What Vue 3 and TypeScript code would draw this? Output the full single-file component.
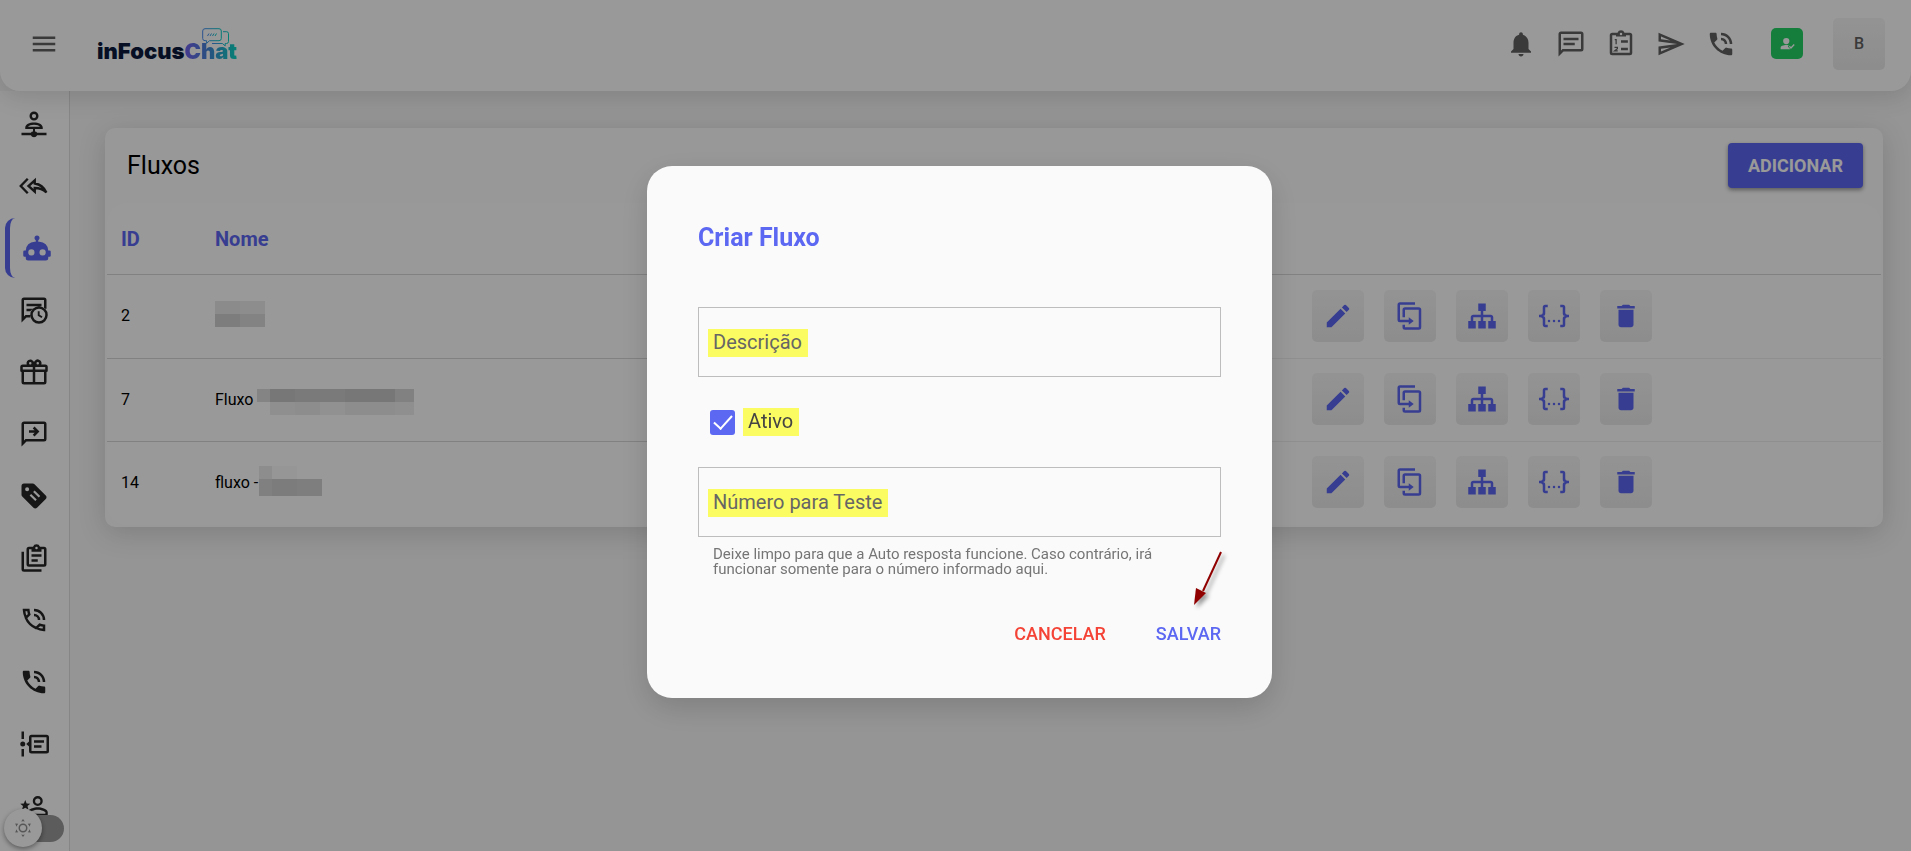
<script setup lang="ts">
import { ref } from 'vue'

interface Icon {
  fill?: string
  line?: string
}

interface Block {
  x: number
  y: number
  w: number
  h: number
  c: string
}

interface Flow {
  id: number
  name: string
  width: number
  height: number
  blocks: Block[]
}

const phone =
  'M20 15.5c-1.25 0-2.45-.2-3.57-.57a1.02 1.02 0 0 0-1.02.24l-2.2 2.2a15.045 15.045 0 0 1-6.59-6.59l2.2-2.21a.96.96 0 0 0 .25-1A11.36 11.36 0 0 1 8.5 4c0-.55-.45-1-1-1H4c-.55 0-1 .45-1 1 0 9.39 7.61 17 17 17 .55 0 1-.45 1-1v-3.5c0-.55-.45-1-1-1zM19 12h2a9 9 0 0 0-9-9v2c3.87 0 7 3.13 7 7zm-4 0h2c0-2.76-2.24-5-5-5v2c1.66 0 3 1.34 3 3z'
const bubble =
  'M20 2a2 2 0 0 1 2 2v12a2 2 0 0 1-2 2H6l-4 4V4c0-1.11.9-2 2-2h16M4 4v13.17L5.17 16H20V4H4'

const topIcons: { label: string; icon: Icon }[] = [
  {
    label: 'Notificações',
    icon: {
      fill: 'M12 22c1.1 0 2-.9 2-2h-4c0 1.1.89 2 2 2zm6-6v-5c0-3.07-1.64-5.64-4.5-6.32V4c0-.83-.67-1.5-1.5-1.5s-1.5.67-1.5 1.5v.68C7.63 5.36 6 7.92 6 11v5l-2 2v1h16v-1l-2-2z',
    },
  },
  { label: 'Mensagens', icon: { fill: bubble + 'M6 7h12v2H6V7m0 4h9v2H6v-2' } },
  {
    label: 'Tarefas',
    icon: {
      fill: 'M19 3h-4.2a3 3 0 0 0-5.6 0H5a2 2 0 0 0-2 2v14a2 2 0 0 0 2 2h14a2 2 0 0 0 2-2V5a2 2 0 0 0-2-2M12 3a1 1 0 1 1 0 2 1 1 0 0 1 0-2M5 5h3v1h8V5h3v14H5V5M12 9h5.500v2H12V9m0 6h5.500v2H12v-2z',
      line: 'M7 8.400h1.100v3.800M6.800 14.600h2.300v1.200l-2.200 1.700h2.500|1',
    },
  },
  {
    label: 'Enviar',
    icon: {
      fill: 'M4.010 6.030l7.510 3.220-7.520-1 .01-2.220m7.500 8.720L4 17.970v-2.220l7.510-1M2.010 3L2 10l15 2-15 2 .01 7L23 12 2.010 3z',
    },
  },
  { label: 'Chamadas', icon: { fill: phone } },
]

const sideIcons: { label: string; icon: Icon; active?: boolean }[] = [
  {
    label: 'Atendimentos',
    icon: {
      fill: 'M12 2a3.600 3.600 0 1 0 0 7.200A3.600 3.600 0 0 0 12 2m0 1.900a1.700 1.700 0 1 1 0 3.400 1.700 1.700 0 0 1 0-3.400M12 10.700c-3.600 0-7 1.500-7 4V16h14v-1.300c0-2.500-3.400-4-7-4m0 1.900c2.200 0 4.100.6 4.800 1.600H7.200c.7-1 2.600-1.600 4.800-1.600M11.200 16h1.600v2a2 2 0 0 1 1.700 1H22v1.900h-7.500a2.700 2.700 0 0 1-5 0H2V19h7.500a2 2 0 0 1 1.700-1z',
    },
  },
  {
    label: 'Respostas rápidas',
    icon: { line: 'M7 6.200 1.400 12 7 17.800M12.600 7.500 7.600 12l5 4.500v-2.900c4 0 6.500.8 9.300 3.600-2-4.300-4.600-6.500-9.300-7.200z|1.9' },
  },
  {
    label: 'Fluxos',
    active: true,
    icon: {
      fill: 'M12 2a2 2 0 0 1 2 2c0 .74-.4 1.390-1 1.730V7h1a7 7 0 0 1 7 7h1a1 1 0 0 1 1 1v3a1 1 0 0 1-1 1h-1v1a2 2 0 0 1-2 2H5a2 2 0 0 1-2-2v-1H2a1 1 0 0 1-1-1v-3a1 1 0 0 1 1-1h1a7 7 0 0 1 7-7h1V5.730c-.6-.34-1-.99-1-1.730a2 2 0 0 1 2-2M7.500 13a2.500 2.500 0 1 0 0 5 2.500 2.500 0 0 0 0-5m9 0a2.500 2.500 0 1 0 0 5 2.500 2.500 0 0 0 0-5z',
    },
  },
  {
    label: 'Agendamentos',
    icon: {
      fill: 'M2 22V4a2 2 0 0 1 2-2h16a2 2 0 0 1 2 2v7h-2V4H4v13.200L5.200 16H9v2H6zM6 7h12v2H6zM6 11h5l-2 2H6zM16 9a7 7 0 1 0 0 14 7 7 0 0 0 0-14m0 2a5 5 0 1 1 0 10 5 5 0 0 1 0-10M15 13v3.600l3 1.800.8-1.300-2.300-1.400V13z',
    },
  },
  {
    label: 'Promoções',
    icon: {
      fill: 'M22 12v8a2 2 0 0 1-2 2H4a2 2 0 0 1-2-2v-8a1 1 0 0 1-1-1V8a2 2 0 0 1 2-2h3.170A3 3 0 0 1 9 2c1 0 1.880.5 2.430 1.240L12 4l.57-.76A3 3 0 0 1 17.830 6H21a2 2 0 0 1 2 2v3a1 1 0 0 1-1 1M4 20h7v-8H4v8m16 0v-8h-7v8h7M9 4a1 1 0 1 0 0 2 1 1 0 0 0 0-2m6 0a1 1 0 1 0 0 2 1 1 0 0 0 0-2M3 8v2h8V8H3m10 0v2h8V8h-8z',
    },
  },
  {
    label: 'Encaminhar',
    icon: { fill: bubble + 'M8 9h4.500L11 7.500l1.420-1.420L16.340 10l-3.920 3.920L11 12.500l1.500-1.500H8V9z' },
  },
  {
    label: 'Etiquetas',
    icon: {
      fill: 'M21.400 11.600l-9-9A2 2 0 0 0 11 2H4a2 2 0 0 0-2 2v7c0 .5.2 1 .6 1.400l9 9c.8.8 2 .8 2.800 0l7-7c.8-.8.8-2 0-2.800M6.500 5a1.600 1.600 0 1 1 0 3.200 1.600 1.600 0 0 1 0-3.200M8.500 11.500l1.200-1.200 4.500 4.500-1.200 1.200zM11.300 8.700l1.200-1.200 4.500 4.500-1.200 1.200z',
    },
  },
  {
    label: 'Relatórios',
    icon: {
      fill: 'M20 3h-3.200a3 3 0 0 0-5.600 0H8a2 2 0 0 0-2 2v12a2 2 0 0 0 2 2h12a2 2 0 0 0 2-2V5a2 2 0 0 0-2-2m-6 0a1 1 0 1 1 0 2 1 1 0 0 1 0-2M8 5h2v2h8V5h2v12H8V5M10 9h8v2h-8V9m0 4h5v2h-5v-2M2 7h2v14h14v2H4a2 2 0 0 1-2-2z',
    },
  },
  {
    label: 'Ligações',
    icon: {
      line: 'M4 4h3.500c.1 1.200.3 2.400.7 3.500L5.600 10.100C4.600 8.200 4.100 6 4 4zM5.300 9.900A16 16 0 0 0 14 18.600M20 20v-3.500c-1.200-.1-2.400-.3-3.500-.7l-2.600 2.600c1.900 1 4 1.500 6.100 1.600zM12 4a8 8 0 0 1 8 8M12 8a4 4 0 0 1 4 4|2',
    },
  },
  { label: 'Chamadas', icon: { fill: phone } },
  {
    label: 'Linha do tempo',
    icon: {
      fill: 'M2 2h2v6H2zM2 16h2v6H2zM3 10a2 2 0 1 1 0 4 2 2 0 0 1 0-4M22 4.500H10a2 2 0 0 0-2 2V10l-2.200 2L8 14v3.500a2 2 0 0 0 2 2h12a2 2 0 0 0 2-2v-11a2 2 0 0 0-2-2m0 13H10v-11h12zM12 9h8v2h-8zM12 13h6v2h-6z',
    },
  },
  {
    label: 'Usuários',
    icon: {
      fill: 'M15 4a4 4 0 1 0 0 8 4 4 0 0 0 0-8m0 1.900a2.100 2.100 0 1 1 0 4.200 2.100 2.100 0 0 1 0-4.200M15 13c-2.700 0-8 1.300-8 4v3h16v-3c0-2.700-5.300-4-8-4m0 1.900c3 0 6.100 1.500 6.100 2.100v1.100H8.900V17c0-.6 3.100-2.100 6.100-2.100M5 13.300l-2.500 1.500.7-2.800L1 10.100l2.900-.2L5 7.200l1.100 2.700 2.900.2L6.800 12l.7 2.800z',
    },
  },
]

const actions: { label: string; icon: Icon }[] = [
  {
    label: 'Editar',
    icon: {
      fill: 'M3 17.250V21h3.750L17.810 9.940l-3.750-3.750L3 17.250zM20.710 7.040a1 1 0 0 0 0-1.410l-2.340-2.340a1 1 0 0 0-1.410 0l-1.830 1.830 3.750 3.750 1.830-1.830z',
    },
  },
  {
    label: 'Duplicar',
    icon: {
      fill: 'M11 17H4a2 2 0 0 1-2-2V3a2 2 0 0 1 2-2h12v2H4v12h7v-2l4 3-4 3v-2m8 4V7H8v6H6V7a2 2 0 0 1 2-2h11a2 2 0 0 1 2 2v14a2 2 0 0 1-2 2H8a2 2 0 0 1-2-2v-2h2v2h11z',
    },
  },
  {
    label: 'Abrir fluxo',
    icon: {
      fill: 'M9 2v6h2v3H5c-1.110 0-2 .89-2 2v3H1v6h6v-6H5v-3h6v3H9v6h6v-6h-2v-3h6v3h-2v6h6v-6h-2v-3c0-1.110-.89-2-2-2h-6V8h2V2H9z',
    },
  },
  {
    label: 'Exportar',
    icon: {
      fill: 'M5 3h2v2H5v5a2 2 0 0 1-2 2 2 2 0 0 1 2 2v5h2v2H5c-1.070-.27-2-.9-2-2v-4a2 2 0 0 0-2-2H0v-2h1a2 2 0 0 0 2-2V5a2 2 0 0 1 2-2m14 0a2 2 0 0 1 2 2v4a2 2 0 0 0 2 2h1v2h-1a2 2 0 0 0-2 2v4a2 2 0 0 1-2 2h-2v-2h2v-5a2 2 0 0 1 2-2 2 2 0 0 1-2-2V5h-2V3h2m-7 12a1 1 0 1 1 0 2 1 1 0 0 1 0-2m-4 0a1 1 0 1 1 0 2 1 1 0 0 1 0-2m8 0a1 1 0 1 1 0 2 1 1 0 0 1 0-2z',
    },
  },
  {
    label: 'Excluir',
    icon: { fill: 'M6 19c0 1.100.9 2 2 2h8c1.100 0 2-.9 2-2V7H6v12zM19 4h-3.500l-1-1h-5l-1 1H5v2h14V4z' },
  },
]

const flows: Flow[] = [
  {
    id: 2,
    name: '',
    width: 50,
    height: 30,
    blocks: [
      { x: 0, y: 0, w: 25, h: 13, c: '#e8e8e8' },
      { x: 25, y: 0, w: 25, h: 13, c: '#ececec' },
      { x: 0, y: 13, w: 25, h: 13, c: '#d0d0d0' },
      { x: 25, y: 13, w: 25, h: 13, c: '#dadada' },
    ],
  },
  {
    id: 7,
    name: 'Fluxo',
    width: 157,
    height: 32,
    blocks: [
      { x: 0, y: 6, w: 13, h: 13, c: '#dcdcdc' },
      { x: 13, y: 6, w: 25, h: 13, c: '#c6c6c6' },
      { x: 38, y: 6, w: 50, h: 13, c: '#cccccc' },
      { x: 88, y: 6, w: 50, h: 13, c: '#c6c6c6' },
      { x: 138, y: 6, w: 19, h: 13, c: '#d8d8d8' },
      { x: 13, y: 19, w: 25, h: 13, c: '#efefef' },
      { x: 38, y: 19, w: 25, h: 13, c: '#ececec' },
      { x: 63, y: 19, w: 25, h: 13, c: '#f2f2f2' },
      { x: 88, y: 19, w: 50, h: 13, c: '#ebebeb' },
      { x: 138, y: 19, w: 19, h: 13, c: '#efefef' },
    ],
  },
  {
    id: 14,
    name: 'fluxo -',
    width: 63,
    height: 32,
    blocks: [
      { x: 0, y: 0, w: 13, h: 13, c: '#ebebeb' },
      { x: 13, y: 0, w: 25, h: 13, c: '#fafafa' },
      { x: 0, y: 13, w: 13, h: 17, c: '#d5d5d5' },
      { x: 13, y: 13, w: 25, h: 17, c: '#cfcfcf' },
      { x: 38, y: 13, w: 25, h: 17, c: '#d2d2d2' },
    ],
  },
]

const description = ref('')
const active = ref(true)
const testNumber = ref('')
const dark = ref(false)

const linePath = (icon: Icon) => (icon.line ?? '').split('|')[0]
const lineWidth = (icon: Icon) => (icon.line ?? '').split('|')[1]
</script>

<template>
  <div class="app">
    <header class="topbar">
      <button class="icon-btn" type="button" aria-label="Menu">
        <svg class="icon" viewBox="0 0 24 24"><path d="M3 18h18v-2H3v2zm0-5h18v-2H3v2zm0-7v2h18V6H3z" /></svg>
      </button>
      <a class="logo" href="#">
        <span>inFocus</span><span class="logo-chat">Chat</span>
        <svg class="logo-bubbles" viewBox="0 0 28 20" fill="none">
          <defs>
            <linearGradient id="bubble-ink" x1="0" x2="1">
              <stop offset="0" stop-color="#4b8bf0" />
              <stop offset="1" stop-color="#08d0c4" />
            </linearGradient>
          </defs>
          <path
            d="M3 .7h14a2.300 2.300 0 0 1 2.300 2.300v7.400a2.300 2.300 0 0 1-2.300 2.300H7.500L4.600 15.400v-2.700H3A2.300 2.300 0 0 1 .7 10.400V3A2.300 2.300 0 0 1 3 .7z"
            stroke="url(#bubble-ink)"
          />
          <path
            d="M21 3.700h3.500A2 2 0 0 1 26.500 5.700v7.800a2 2 0 0 1-2 2h-1.300v2.400l-2.800-2.400H10"
            stroke="url(#bubble-ink)"
          />
          <path d="M5.500 8l1.500-2.500M8 8l1.500-2.500M10.500 8L12 5.500M13 8l1.500-2.500" stroke="url(#bubble-ink)" />
        </svg>
      </a>
      <nav class="tools" aria-label="Atalhos">
        <button v-for="t in topIcons" :key="t.label" class="icon-btn" type="button" :aria-label="t.label">
          <svg class="icon" viewBox="0 0 24 24">
            <path :d="t.icon.fill" fill-rule="evenodd" />
            <path v-if="t.icon.line" :d="linePath(t.icon)" :stroke-width="lineWidth(t.icon)" class="stroke" />
          </svg>
        </button>
      </nav>
      <button class="presence" type="button" aria-label="Disponível">
        <svg viewBox="0 0 24 24">
          <path
            d="M10 3a5 5 0 1 1 0 10 5 5 0 0 1 0-10M10 14.500c1.500 0 2.900.2 4.100.6l-1.600 1.600 4 4.300H1v-2.300c0-2.600 4.500-4.200 9-4.200M23.500 14.400l-6 6.300-3.300-3.500 1.600-1.600 1.700 1.800 4.400-4.600z"
          />
        </svg>
      </button>
      <button class="avatar soft" type="button">B</button>
    </header>

    <div class="body">
      <aside class="sidebar">
        <a
          v-for="s in sideIcons"
          :key="s.label"
          class="side-link"
          :class="{ active: s.active }"
          href="#"
          :aria-label="s.label"
        >
          <svg class="icon" viewBox="0 0 24 24">
            <path v-if="s.icon.fill" :d="s.icon.fill" fill-rule="evenodd" />
            <path v-if="s.icon.line" :d="linePath(s.icon)" :stroke-width="lineWidth(s.icon)" class="stroke" />
          </svg>
        </a>
      </aside>

      <main class="content">
        <section class="card">
          <div class="card-head">
            <h1>Fluxos</h1>
            <button class="add" type="button">ADICIONAR</button>
          </div>
          <div class="table-wrap">
            <table>
              <thead>
                <tr>
                  <th class="col-id" scope="col">ID</th>
                  <th scope="col">Nome</th>
                  <th class="col-actions" scope="col" aria-label="Ações"></th>
                </tr>
              </thead>
              <tbody>
                <tr v-for="f in flows" :key="f.id">
                  <td>{{ f.id }}</td>
                  <td>
                    <div class="name" :class="{ tight: f.name.endsWith('-') }">
                      <span v-if="f.name">{{ f.name }}</span>
                      <svg :width="f.width" :height="f.height" shape-rendering="crispEdges">
                        <rect
                          v-for="(b, i) in f.blocks"
                          :key="i"
                          :x="b.x"
                          :y="b.y"
                          :width="b.w"
                          :height="b.h"
                          :fill="b.c"
                        />
                      </svg>
                    </div>
                  </td>
                  <td class="cell-actions">
                    <div class="actions">
                      <button
                        v-for="a in actions"
                        :key="a.label"
                        class="action soft"
                        type="button"
                        :aria-label="a.label"
                      >
                        <svg class="icon" viewBox="0 0 24 24"><path :d="a.icon.fill" /></svg>
                      </button>
                    </div>
                  </td>
                </tr>
              </tbody>
            </table>
          </div>
        </section>
      </main>
    </div>

    <label class="theme">
      <input v-model="dark" type="checkbox" role="switch" aria-label="Modo escuro" />
      <span class="knob">
        <svg viewBox="0 0 24 24">
          <circle cx="12" cy="12" r="5" fill="none" stroke="currentColor" stroke-width="2" />
          <path
            d="M12 0l2.400 3.400a9 9 0 0 0-4.800 0zM12 24l2.400-3.400a9 9 0 0 1-4.800 0zM1.600 6l4.100.3a9 9 0 0 0-2.400 4.100zM22.400 6l-4.100.3a9 9 0 0 1 2.400 4.100zM1.600 18l4.100-.3a9 9 0 0 1-2.400-4.100zM22.400 18l-4.100-.3a9 9 0 0 0 2.400-4.100z"
            fill="currentColor"
          />
        </svg>
      </span>
    </label>

    <div class="backdrop">
      <form class="dialog" role="dialog" aria-modal="true" aria-labelledby="dialog-title" @submit.prevent>
        <h2 id="dialog-title">Criar Fluxo</h2>
        <div class="field">
          <input id="description" v-model="description" type="text" />
          <label for="description" class="mark">Descrição</label>
        </div>
        <div class="check">
          <input id="active" v-model="active" type="checkbox" />
          <label for="active" class="mark">Ativo</label>
        </div>
        <div class="field">
          <input id="test-number" v-model="testNumber" type="text" aria-describedby="test-hint" />
          <label for="test-number" class="mark">Número para Teste</label>
        </div>
        <p id="test-hint" class="hint">
          Deixe limpo para que a Auto resposta funcione. Caso contrário, irá funcionar somente para o número
          informado aqui.
        </p>
        <div class="dialog-actions">
          <button class="cancel" type="button">CANCELAR</button>
          <button class="save" type="submit">SALVAR</button>
        </div>
        <svg class="pointer" viewBox="0 0 36 60">
          <path d="M31 2L13 41" stroke="#900000" stroke-width="2" />
          <path d="M4 55l2-17 10 5z" fill="#900000" />
        </svg>
      </form>
    </div>
  </div>
</template>

<style>
body {
  margin: 0;
}
</style>

<style scoped>
* {
  box-sizing: border-box;
}
.app {
  --primary: #5c67f2;
  height: 100vh;
  display: flex;
  flex-direction: column;
  position: relative;
  overflow: hidden;
  background: #f8f8f8;
  color: #000;
  font-family: Roboto, 'Liberation Sans', sans-serif;
  font-size: 16px;
}
button {
  font-family: inherit;
  border: 0;
  padding: 0;
  background: none;
  cursor: pointer;
}
.icon {
  width: 30px;
  height: 30px;
  display: block;
  fill: currentColor;
}
.stroke {
  fill: none;
  stroke: currentColor;
}
.soft {
  background: linear-gradient(#f6f6f6, #ebebeb);
  border-radius: 5px;
}

.topbar {
  flex: none;
  height: 91px;
  display: flex;
  align-items: center;
  padding: 0 26px 4px 29px;
  background: #fff;
  border-radius: 0 0 20px 20px;
  box-shadow: 0 6px 24px rgba(0, 0, 0, 0.12);
  color: #616161;
  position: relative;
}
.logo {
  position: relative;
  display: flex;
  margin-left: 38px;
  padding-top: 14px;
  font-family: Inter, 'Liberation Sans', sans-serif;
  font-size: 22px;
  font-weight: 900;
  line-height: 24px;
  color: #0b1a3d;
  text-decoration: none;
}
.logo-chat {
  background: linear-gradient(90deg, #7560f0, #4585d8 45%, #0ad8c4);
  background-clip: text;
  color: transparent;
}
.logo-bubbles {
  position: absolute;
  right: 7px;
  top: 3px;
  width: 28px;
  height: 20px;
}
.tools {
  display: flex;
  gap: 20px;
  margin-left: auto;
}
.icon-btn {
  color: inherit;
}
.presence {
  width: 32px;
  height: 31px;
  margin: 0 30px 0 35px;
  display: grid;
  place-items: center;
  border-radius: 5px;
  background: #25d366;
}
.presence svg {
  width: 15px;
  height: 15px;
  fill: #fff;
}
.avatar {
  width: 52px;
  height: 52px;
  font-size: 16px;
  font-weight: 500;
  color: #616161;
}

.body {
  flex: 1;
  min-height: 0;
  display: flex;
}
.sidebar {
  flex: none;
  width: 70px;
  padding-top: 2px;
  overflow: hidden;
  background: #fff;
  border-right: 1px solid #e0e0e0;
  color: #262626;
}
.side-link {
  height: 62px;
  padding-right: 1px;
  display: grid;
  place-items: center;
  color: inherit;
}
.side-link.active {
  height: 60px;
  margin: 1px 0 1px 5px;
  border-left: 5px solid var(--primary);
  border-radius: 10px 0 0 10px;
  padding-right: 5px;
  color: var(--primary);
}

.content {
  flex: 1;
  padding: 37px 28px 0 35px;
}
.card {
  border-radius: 10px;
  padding: 0 2px 2px;
  background: #fdfdfd;
  box-shadow: 0 6px 28px rgba(0, 0, 0, 0.15);
}
.card-head {
  height: 75px;
  display: flex;
  align-items: center;
  justify-content: space-between;
  padding: 0 18px 0 20px;
}
h1 {
  margin: 0;
  font-size: 25px;
  font-weight: 400;
}
.add {
  height: 45px;
  padding: 0 20px;
  border-radius: 4px;
  background: var(--primary);
  box-shadow: 0 2px 4px rgba(0, 0, 0, 0.4);
  color: #fff;
  font-size: 18px;
  font-weight: 700;
}
.table-wrap {
  border-radius: 20px;
  background: #fff;
}
table {
  width: 100%;
  table-layout: fixed;
  border-spacing: 0;
}
th,
td {
  padding: 0 0 0 14px;
  text-align: left;
  border-bottom: 1px solid #d8d8d8;
}
th {
  height: 72px;
  color: var(--primary);
  font-size: 20px;
  font-weight: 700;
}
td {
  height: 84px;
  padding-bottom: 2px;
}
td.cell-actions {
  padding-left: 0;
  border-color: #efefef;
}
tbody tr:last-child td {
  border-color: transparent;
}
tbody tr:nth-child(n + 2) td {
  height: 83px;
}
.col-id {
  width: 94px;
}
.col-actions {
  width: 45%;
}
.name {
  display: flex;
  align-items: center;
  gap: 4px;
}
.name.tight {
  gap: 1px;
}
.actions {
  display: flex;
  justify-content: center;
  gap: 20px;
}
.action {
  width: 52px;
  height: 52px;
  display: grid;
  place-items: center;
  color: var(--primary);
}

.theme {
  position: absolute;
  left: 4px;
  bottom: 4px;
  width: 60px;
  height: 38px;
  display: flex;
  align-items: center;
}
.theme input {
  appearance: none;
  margin: 0 0 0 14px;
  width: 46px;
  height: 27px;
  border-radius: 14px;
  background: #9a9a9a;
}
.knob {
  position: absolute;
  left: 0;
  top: 0;
  width: 38px;
  height: 38px;
  display: grid;
  place-items: center;
  border-radius: 50%;
  background: #fff;
  box-shadow: 0 2px 5px rgba(0, 0, 0, 0.4);
  color: #8f8f8f;
}
.knob svg {
  width: 18px;
  height: 18px;
}

.backdrop {
  position: fixed;
  inset: 0;
  display: grid;
  place-items: center;
  padding: 13px 0 0 8px;
  background: rgba(0, 0, 0, 0.4);
}
.dialog {
  position: relative;
  width: 625px;
  max-width: 100%;
  padding: 47px 51px 42px;
  border-radius: 25px;
  background: #fafafa;
  box-shadow: 0 10px 30px rgba(0, 0, 0, 0.15);
}
h2 {
  margin: 0 0 44px;
  font-size: 25px;
  line-height: 50px;
  font-weight: 700;
  color: var(--primary);
}
.field {
  position: relative;
  height: 70px;
}
.field input {
  width: 100%;
  height: 100%;
  padding: 0 15px;
  border: 1px solid #bdbdbd;
  border-radius: 0;
  background: transparent;
  font-family: inherit;
  font-size: 20px;
}
.mark {
  padding: 0 6px 2px 5px;
  background: #fbfb62;
  color: #666;
  font-size: 20px;
  line-height: 26px;
}
.field .mark {
  position: absolute;
  left: 10px;
  top: 22px;
}
.check {
  display: flex;
  align-items: center;
  gap: 8px;
  height: 90px;
  padding-left: 12px;
}
.check input {
  appearance: none;
  width: 25px;
  height: 25px;
  margin: 0;
  border-radius: 3px;
  background: var(--primary);
  display: grid;
  place-items: center;
}
.check input:checked::after {
  content: '';
  width: 8px;
  height: 16px;
  margin-bottom: 5px;
  border: solid #fff;
  border-width: 0 2px 2px 0;
  rotate: 42deg;
}
.check .mark {
  color: #444;
}
.hint {
  margin: 10px 0 0;
  padding: 0 60px 0 15px;
  font-size: 15px;
  line-height: 15px;
  color: #757575;
}
.dialog-actions {
  display: flex;
  justify-content: flex-end;
  gap: 50px;
  margin-top: 33px;
}
.dialog-actions button {
  height: 46px;
  font-size: 18px;
  font-weight: 500;
}
.cancel {
  color: #f44336;
}
.save {
  color: var(--primary);
}
.pointer {
  position: absolute;
  right: 46px;
  bottom: 88px;
  width: 36px;
  height: 60px;
  filter: drop-shadow(3px 3px 2px rgba(0, 0, 0, 0.4));
  pointer-events: none;
}
</style>
